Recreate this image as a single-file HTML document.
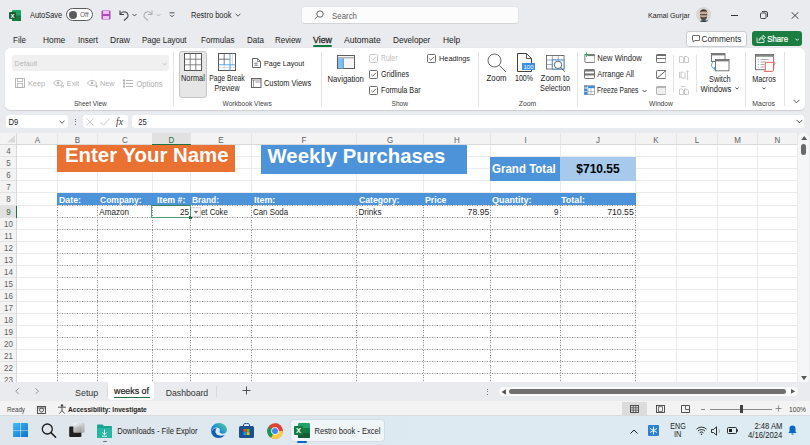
<!DOCTYPE html><html><head><meta charset="utf-8"><style>
html,body{margin:0;padding:0;}
body{width:810px;height:445px;overflow:hidden;position:relative;background:#eaebee;font-family:"Liberation Sans", sans-serif;}
.t{position:absolute;white-space:nowrap;}
.b{position:absolute;box-sizing:border-box;}
svg{position:absolute;}
</style></head><body>
<svg style="left:9px;top:10px" width="12" height="11" viewBox="0 0 12 11"><rect x="3" y="0" width="9" height="11" rx="1" fill="#21a366"/><rect x="3" y="5.5" width="9" height="5.5" fill="#107c41"/><rect x="0" y="2" width="7" height="7" rx="1" fill="#185c37"/><text x="3.5" y="7.6" font-size="6" font-weight="bold" fill="#fff" text-anchor="middle" font-family="Liberation Sans">X</text></svg>
<div class="t" style="left:30px;top:12.06px;font-size:7.4px;line-height:8.88px;color:#242424;transform:scale(1.0,1.1);transform-origin:left center;">AutoSave</div>
<div class="b" style="left:66px;top:8px;width:27px;height:13px;border:1px solid #5c5c5c;border-radius:7px;background:#fff;"></div>
<div class="b" style="left:68.5px;top:10.5px;width:8px;height:8px;border-radius:50%;background:#5c5c5c"></div>
<div class="t" style="left:80px;top:11.30px;font-size:6.5px;line-height:7.80px;color:#5c5c5c;transform:scale(1.0,1.1);transform-origin:left center;">Off</div>
<svg style="left:101px;top:10px" width="10" height="10" viewBox="0 0 10 10"><rect x="0.5" y="0.5" width="9" height="9" rx="1" fill="#b146c2"/><rect x="2" y="1" width="6" height="3" fill="#e9c6ee"/><rect x="2" y="6" width="6" height="3.2" fill="#e9c6ee"/></svg>
<svg style="left:118px;top:9px" width="12" height="12" viewBox="0 0 12 12"><path d="M2 1.5v4h4" fill="none" stroke="#424242" stroke-width="1.1"/><path d="M2.3 5.2C3.5 3 6 2.2 8 3.2c2 1 2.6 3.5 1.5 5.3L6 11.5" fill="none" stroke="#424242" stroke-width="1.1"/></svg>
<svg style="left:132px;top:13px" width="5" height="4" viewBox="0 0 5 4"><path d="M0.5 1l2 2 2-2" fill="none" stroke="#424242" stroke-width="0.9"/></svg>
<svg style="left:142px;top:9px" width="12" height="12" viewBox="0 0 12 12"><path d="M10 1.5v4h-4" fill="none" stroke="#b0b0b0" stroke-width="1.1"/><path d="M9.7 5.2C8.5 3 6 2.2 4 3.2c-2 1-2.6 3.5-1.5 5.3L6 11.5" fill="none" stroke="#b0b0b0" stroke-width="1.1"/></svg>
<svg style="left:156px;top:13px" width="5" height="4" viewBox="0 0 5 4"><path d="M0.5 1l2 2 2-2" fill="none" stroke="#b0b0b0" stroke-width="0.9"/></svg>
<svg style="left:169px;top:12px" width="6" height="6" viewBox="0 0 6 6"><path d="M0.5 0.8h5" stroke="#424242" stroke-width="0.9"/><path d="M1 2.8l2 2 2-2" fill="none" stroke="#424242" stroke-width="0.9"/></svg>
<div class="t" style="left:191px;top:11.30px;font-size:7.5px;line-height:9.00px;color:#242424;transform:scale(1.0,1.1);transform-origin:left center;">Restro book</div>
<svg style="left:235px;top:13px" width="6" height="4" viewBox="0 0 6 4"><path d="M0.5 0.7l2.5 2.5 2.5-2.5" fill="none" stroke="#424242" stroke-width="0.9"/></svg>
<div class="b" style="left:301px;top:5.5px;width:218.20000000000005px;height:18.7px;background:#fcfcfc;border:1px solid #e2e4e7;border-bottom-color:#d2d4d8;border-radius:4px;"></div>
<svg style="left:314px;top:9.5px" width="10" height="10" viewBox="0 0 10 10"><circle cx="6" cy="4" r="3.2" fill="none" stroke="#555" stroke-width="0.9"/><path d="M3.7 6.3L0.8 9.2" stroke="#555" stroke-width="0.9"/></svg>
<div class="t" style="left:332px;top:11.66px;font-size:7.9px;line-height:9.48px;color:#5f5f5f;transform:scale(1.0,1.1);transform-origin:left center;">Search</div>
<div class="t" style="left:648px;top:11.54px;font-size:7.1px;line-height:8.52px;color:#242424;transform:scale(1.0,1.1);transform-origin:left center;">Kamal Gurjar</div>
<svg style="left:696px;top:7.3px" width="15.2" height="15.2" viewBox="0 0 15.2 15.2"><defs><clipPath id="av"><circle cx="7.6" cy="7.6" r="7.6"/></clipPath></defs><g clip-path="url(#av)"><rect width="15.2" height="15.2" fill="#dcd6d0"/><ellipse cx="7.6" cy="8" rx="3.6" ry="5" fill="#d4a88c"/><path d="M3.8 6.5C3.8 3.5 5.5 2.3 7.6 2.3s3.8 1.2 3.8 4.2L10.8 5C9.5 4.3 5.7 4.3 4.4 5z" fill="#3a3a3a"/><rect x="4" y="7" width="7.2" height="1.3" fill="#555"/><path d="M4.2 9.2c0 2.5 1.3 4 3.4 4s3.4-1.5 3.4-4c-.8.8-1.8 1-3.4 1s-2.6-.2-3.4-1z" fill="#4a4a4a"/><path d="M3.5 15.2c.5-1.5 1.5-2 4.1-2s3.6.5 4.1 2z" fill="#2f3a48"/><path d="M10 13.8l2-1 .8 2.4z" fill="#2a6fd0"/></g></svg>
<div class="b" style="left:731px;top:14.5px;width:7px;height:1.0px;background:#333;"></div>
<svg style="left:760px;top:11px" width="8" height="8" viewBox="0 0 8 8"><rect x="0.5" y="2" width="5.5" height="5.5" rx="1" fill="none" stroke="#333" stroke-width="0.9"/><path d="M2 0.5h4a1.5 1.5 0 0 1 1.5 1.5v4" fill="none" stroke="#333" stroke-width="0.9"/></svg>
<svg style="left:791px;top:11.5px" width="8" height="7" viewBox="0 0 8 7"><path d="M0.5 0.2l7 6.6M7.5 0.2l-7 6.6" stroke="#333" stroke-width="0.9"/></svg>
<div class="t" style="left:13px;top:35.88px;font-size:8.2px;line-height:9.84px;color:#242424;transform:scale(0.9756097560975611,1.1);transform-origin:left center;">File</div>
<div class="t" style="left:43px;top:35.88px;font-size:8.2px;line-height:9.84px;color:#242424;transform:scale(1.0170731707317073,1.1);transform-origin:left center;">Home</div>
<div class="t" style="left:78px;top:35.88px;font-size:8.2px;line-height:9.84px;color:#242424;transform:scale(0.9756097560975611,1.1);transform-origin:left center;">Insert</div>
<div class="t" style="left:110px;top:35.88px;font-size:8.2px;line-height:9.84px;color:#242424;transform:scale(1.0426829268292686,1.1);transform-origin:left center;">Draw</div>
<div class="t" style="left:142.4px;top:35.88px;font-size:8.2px;line-height:9.84px;color:#242424;transform:scale(0.9695121951219513,1.1);transform-origin:left center;">Page Layout</div>
<div class="t" style="left:200.5px;top:35.88px;font-size:8.2px;line-height:9.84px;color:#242424;transform:scale(0.9817073170731709,1.1);transform-origin:left center;">Formulas</div>
<div class="t" style="left:246.7px;top:35.88px;font-size:8.2px;line-height:9.84px;color:#242424;transform:scale(0.9756097560975611,1.1);transform-origin:left center;">Data</div>
<div class="t" style="left:275px;top:35.88px;font-size:8.2px;line-height:9.84px;color:#242424;transform:scale(0.9695121951219513,1.1);transform-origin:left center;">Review</div>
<div class="t" style="left:343.6px;top:35.88px;font-size:8.2px;line-height:9.84px;color:#242424;transform:scale(1.0463414634146342,1.1);transform-origin:left center;">Automate</div>
<div class="t" style="left:393px;top:35.88px;font-size:8.2px;line-height:9.84px;color:#242424;transform:scale(1.0,1.1);transform-origin:left center;">Developer</div>
<div class="t" style="left:443.2px;top:35.88px;font-size:8.2px;line-height:9.84px;color:#242424;transform:scale(1.0231707317073173,1.1);transform-origin:left center;">Help</div>
<div class="t" style="left:312.8px;top:35.88px;font-size:8.2px;line-height:9.84px;color:#242424;transform:scale(1.0731707317073174,1.1);transform-origin:left center;-webkit-text-stroke:0.25px #242424;">View</div>
<div class="b" style="left:313px;top:45px;width:19px;height:1.5px;background:#107c41;border-radius:1px;"></div>
<div class="b" style="left:686px;top:31px;width:61px;height:15.5px;background:#fff;border:1px solid #c9ccd1;border-radius:3px;"></div>
<svg style="left:691.5px;top:35px" width="8" height="7.5" viewBox="0 0 8 7.5"><path d="M0.5 1a.5.5 0 0 1 .5-.5h6a.5.5 0 0 1 .5.5v4a.5.5 0 0 1-.5.5H3L1.2 7V5.5H1a.5.5 0 0 1-.5-.5z" fill="none" stroke="#444" stroke-width="0.8"/></svg>
<div class="t" style="left:701.6px;top:35.07px;font-size:8.22px;line-height:9.86px;color:#242424;transform:scale(1.0,1.1);transform-origin:left center;">Comments</div>
<div class="b" style="left:752.2px;top:31.2px;width:50.09999999999991px;height:14.599999999999998px;background:#1b7d41;border-radius:3px;"></div>
<svg style="left:756px;top:34px" width="10" height="9" viewBox="0 0 10 9"><path d="M1 3.5v5h7v-2.5" fill="none" stroke="#fff" stroke-width="0.8"/><path d="M3 6.5c0-2.5 2-3.5 4-3.5V1.2l2.5 2.3L7 5.8V4.3c-2 0-3 .8-4 2.2z" fill="none" stroke="#fff" stroke-width="0.8"/></svg>
<div class="t" style="left:767.2px;top:35.32px;font-size:7.8px;line-height:9.36px;color:#fff;transform:scale(1.0,1.1);transform-origin:left center;-webkit-text-stroke:0.2px #fff;">Share</div>
<svg style="left:794.8px;top:37.8px" width="4.4" height="3.2" viewBox="0 0 4.4 3.2"><path d="M0.4 0.6l1.8 1.8 1.8-1.8" fill="none" stroke="#fff" stroke-width="0.9"/></svg>
<div class="b" style="left:5px;top:48px;width:800px;height:62px;background:#fff;border-radius:5px;box-shadow:0 0.5px 1px rgba(0,0,0,0.12);"></div>
<div class="b" style="left:173px;top:52px;width:1px;height:54px;background:#e3e3e3;"></div>
<div class="b" style="left:321px;top:52px;width:1px;height:54px;background:#e3e3e3;"></div>
<div class="b" style="left:478px;top:52px;width:1px;height:54px;background:#e3e3e3;"></div>
<div class="b" style="left:576.5px;top:52px;width:1.0px;height:54px;background:#e3e3e3;"></div>
<div class="b" style="left:672.5px;top:55px;width:1.0px;height:38px;background:#e3e3e3;"></div>
<div class="b" style="left:695.5px;top:55px;width:1.0px;height:38px;background:#e3e3e3;"></div>
<div class="b" style="left:745px;top:52px;width:1px;height:54px;background:#e3e3e3;"></div>
<div class="b" style="left:783.5px;top:52px;width:1.0px;height:54px;background:#e3e3e3;"></div>
<div class="b" style="left:12px;top:55px;width:157px;height:15.5px;background:#f0f0f0;border-radius:3px;"></div>
<div class="t" style="left:14.5px;top:59.98px;font-size:7.2px;line-height:8.64px;color:#b8b8b8;transform:scale(1.0,1.1);transform-origin:left center;">Default</div>
<svg style="left:162px;top:61.5px" width="5" height="4" viewBox="0 0 5 4"><path d="M0.5 1l2 2 2-2" fill="none" stroke="#bdbdbd" stroke-width="0.8"/></svg>
<svg style="left:15px;top:78px" width="10" height="10" viewBox="0 0 10 10"><rect x="0.5" y="0.5" width="9" height="9" fill="none" stroke="#b0b0b0" stroke-width="0.9"/><rect x="2.5" y="0.5" width="5" height="3" fill="none" stroke="#b0b0b0" stroke-width="0.8"/><rect x="2.5" y="5.5" width="5" height="4" fill="none" stroke="#b0b0b0" stroke-width="0.8"/></svg>
<div class="t" style="left:28px;top:79.92px;font-size:7.3px;line-height:8.76px;color:#b0b0b0;transform:scale(1.0,1.1);transform-origin:left center;">Keep</div>
<svg style="left:53px;top:79px" width="12" height="9" viewBox="0 0 12 9"><path d="M0.5 4c2-3.5 7-3.5 9 0-2 3.5-7 3.5-9 0z" fill="none" stroke="#b0b0b0" stroke-width="0.9"/><circle cx="5" cy="4" r="1.3" fill="#b0b0b0"/><path d="M8 6l3 2.5M11 6l-3 2.5" stroke="#b0b0b0" stroke-width="0.8"/></svg>
<div class="t" style="left:66.8px;top:79.92px;font-size:7.3px;line-height:8.76px;color:#b0b0b0;transform:scale(1.0,1.1);transform-origin:left center;">Exit</div>
<svg style="left:87px;top:79px" width="12" height="9" viewBox="0 0 12 9"><path d="M0.5 4c2-3.5 7-3.5 9 0-2 3.5-7 3.5-9 0z" fill="none" stroke="#b0b0b0" stroke-width="0.9"/><circle cx="5" cy="4" r="1.3" fill="#b0b0b0"/><path d="M9.5 5.5v3.3M7.8 7.2h3.4" stroke="#b0b0b0" stroke-width="0.8"/></svg>
<div class="t" style="left:99.9px;top:79.92px;font-size:7.3px;line-height:8.76px;color:#b0b0b0;transform:scale(1.0,1.1);transform-origin:left center;">New</div>
<svg style="left:123px;top:78.5px" width="10" height="9" viewBox="0 0 10 9"><rect x="0" y="0.5" width="2" height="2" fill="#b0b0b0"/><rect x="0" y="3.5" width="2" height="2" fill="#b0b0b0"/><rect x="0" y="6.5" width="2" height="2" fill="#b0b0b0"/><path d="M3 1.5h7M3 4.5h7M3 7.5h7" stroke="#b0b0b0" stroke-width="0.9"/></svg>
<div class="t" style="left:136.5px;top:79.77px;font-size:7.55px;line-height:9.06px;color:#b0b0b0;transform:scale(1.0,1.1);transform-origin:left center;">Options</div>
<div class="t" style="left:74px;top:100.20px;font-size:6.5px;line-height:7.80px;color:#424242;transform:scale(1.0,1.1);transform-origin:left center;">Sheet View</div>
<div class="b" style="left:179px;top:50.5px;width:27.5px;height:47.0px;background:#e6e6e6;border:1px solid #c6c6c6;border-radius:3px;"></div>
<svg style="left:184px;top:53px" width="18" height="18" viewBox="0 0 18 18"><rect x="0.5" y="0.5" width="17" height="17" fill="#fff" stroke="#555" stroke-width="1"/><path d="M6.2 0.5v17M11.8 0.5v17M0.5 6.2h17M0.5 11.8h17" stroke="#6a6a6a" stroke-width="0.8"/></svg>
<div class="t" style="left:181px;top:74.96px;font-size:7.4px;line-height:8.88px;color:#242424;transform:scale(1.0,1.1);transform-origin:left center;">Normal</div>
<svg style="left:218px;top:53px" width="18" height="18" viewBox="0 0 18 18"><rect x="0.5" y="0.5" width="17" height="17" fill="#fff" stroke="#555" stroke-width="1"/><path d="M6.2 0.5v11.3M0.5 6.2h11.3" stroke="#555" stroke-width="0.8"/><path d="M0.5 14.5h17M6.2 11.8v5.7M11.8 14.5v3M14.5 0.5v6M14.5 6.2v5.6" stroke="#c8c8c8" stroke-width="0.6"/><path d="M12 0.5v17M0.5 11.8h17" stroke="#4a9ce0" stroke-width="0.9"/></svg>
<div class="t" style="left:227.4px;top:74.96px;font-size:7.4px;line-height:8.88px;color:#242424;transform:translateX(-50%) scale(0.917,1.1);transform-origin:center center;">Page Break</div>
<div class="t" style="left:227.45px;top:84.76px;font-size:7.4px;line-height:8.88px;color:#242424;transform:translateX(-50%) scale(0.954,1.1);transform-origin:center center;">Preview</div>
<svg style="left:252px;top:58px" width="9" height="10" viewBox="0 0 9 10"><path d="M0.5 0.5h5l3 3v6h-8z" fill="#fff" stroke="#555" stroke-width="0.9"/><path d="M5.5 0.5v3h3" fill="none" stroke="#555" stroke-width="0.7"/><path d="M2 5.3h4M2 7.3h4M4 4.3v4" stroke="#777" stroke-width="0.7"/></svg>
<div class="t" style="left:264px;top:59.88px;font-size:7.2px;line-height:8.64px;color:#242424;transform:scale(1.0,1.1);transform-origin:left center;">Page Layout</div>
<svg style="left:251px;top:78px" width="10.5" height="10" viewBox="0 0 10.5 10"><rect x="0.5" y="0.5" width="9.5" height="9" fill="#fff" stroke="#555" stroke-width="0.9"/><path d="M0.5 2h9.5M2.5 2v7.5M4.5 4h5" stroke="#666" stroke-width="0.7"/></svg>
<div class="t" style="left:264px;top:80.46px;font-size:7.4px;line-height:8.88px;color:#242424;transform:scale(1.0,1.1);transform-origin:left center;">Custom Views</div>
<div class="t" style="left:222.5px;top:100.11px;font-size:6.65px;line-height:7.98px;color:#424242;transform:scale(1.0,1.1);transform-origin:left center;">Workbook Views</div>
<svg style="left:337px;top:55px" width="18" height="14" viewBox="0 0 18 14"><rect x="0.5" y="0.5" width="17" height="13" fill="#f6f6f6" stroke="#5e5e5e" stroke-width="1"/><path d="M0.5 2.8h17" stroke="#8a8a8a" stroke-width="0.9"/><rect x="1" y="3.3" width="5.5" height="10.2" fill="#86bdf0"/><path d="M6.3 3.3v10.2" stroke="#3a8ad8" stroke-width="0.8"/></svg>
<div class="t" style="left:327.5px;top:74.78px;font-size:7.7px;line-height:9.24px;color:#242424;transform:scale(1.0,1.1);transform-origin:left center;">Navigation</div>
<svg style="left:369px;top:54.1px" width="9" height="9" viewBox="0 0 9 9"><rect x="0.5" y="0.5" width="8" height="8" rx="1" fill="#fff" stroke="#c4c4c4" stroke-width="0.9"/><path d="M2.2 4.6l1.6 1.6 3.2-3.4" fill="none" stroke="#c4c4c4" stroke-width="0.9"/></svg>
<div class="t" style="left:380.8px;top:54.96px;font-size:7.4px;line-height:8.88px;color:#bdbdbd;transform:scale(0.93,1.1);transform-origin:left center;">Ruler</div>
<svg style="left:369px;top:69.9px" width="9" height="9" viewBox="0 0 9 9"><rect x="0.5" y="0.5" width="8" height="8" rx="1" fill="#fff" stroke="#5c5c5c" stroke-width="0.9"/><path d="M2.2 4.6l1.6 1.6 3.2-3.4" fill="none" stroke="#5c5c5c" stroke-width="0.9"/></svg>
<div class="t" style="left:380.8px;top:70.76px;font-size:7.4px;line-height:8.88px;color:#242424;transform:scale(0.96,1.1);transform-origin:left center;">Gridlines</div>
<svg style="left:369px;top:85.6px" width="9" height="9" viewBox="0 0 9 9"><rect x="0.5" y="0.5" width="8" height="8" rx="1" fill="#fff" stroke="#5c5c5c" stroke-width="0.9"/><path d="M2.2 4.6l1.6 1.6 3.2-3.4" fill="none" stroke="#5c5c5c" stroke-width="0.9"/></svg>
<div class="t" style="left:380.8px;top:87.26px;font-size:7.4px;line-height:8.88px;color:#242424;transform:scale(0.973,1.1);transform-origin:left center;">Formula Bar</div>
<svg style="left:427px;top:54.1px" width="9" height="9" viewBox="0 0 9 9"><rect x="0.5" y="0.5" width="8" height="8" rx="1" fill="#fff" stroke="#5c5c5c" stroke-width="0.9"/><path d="M2.2 4.6l1.6 1.6 3.2-3.4" fill="none" stroke="#5c5c5c" stroke-width="0.9"/></svg>
<div class="t" style="left:439px;top:54.99px;font-size:7.35px;line-height:8.82px;color:#242424;transform:scale(1.0,1.1);transform-origin:left center;">Headings</div>
<div class="t" style="left:391.5px;top:100.14px;font-size:6.6px;line-height:7.92px;color:#424242;transform:scale(1.0,1.1);transform-origin:left center;">Show</div>
<svg style="left:487px;top:53px" width="20" height="20" viewBox="0 0 20 20"><circle cx="7.5" cy="7.5" r="6.5" fill="none" stroke="#555" stroke-width="0.9"/><path d="M12.3 12.3l6.5 6.5" stroke="#555" stroke-width="0.9"/></svg>
<div class="t" style="left:486.5px;top:74.00px;font-size:7.83px;line-height:9.40px;color:#242424;transform:scale(1.0,1.1);transform-origin:left center;">Zoom</div>
<svg style="left:517px;top:53px" width="18" height="19" viewBox="0 0 18 19"><path d="M0.5 0.5h9l5 5v13h-14z" fill="#fff" stroke="#424242" stroke-width="1"/><path d="M9.5 0.5v5h5" fill="none" stroke="#424242" stroke-width="0.9"/><rect x="5" y="10" width="13" height="7" fill="#3b8ee0"/><text x="11.5" y="16" font-size="6" fill="#fff" text-anchor="middle" font-family="Liberation Sans">100</text></svg>
<div class="t" style="left:515.3px;top:74.96px;font-size:7.4px;line-height:8.88px;color:#242424;transform:scale(0.952,1.1);transform-origin:left center;">100%</div>
<svg style="left:546px;top:55px" width="20" height="18" viewBox="0 0 20 18"><rect x="0.5" y="0.5" width="17.5" height="13.5" fill="#fff" stroke="#666" stroke-width="0.9"/><path d="M0.5 5h17.5M0.5 9.5h17.5M6.3 0.5v13.5M12.2 0.5v13.5" stroke="#8a8a8a" stroke-width="0.7"/><rect x="6.3" y="5" width="11.7" height="9" fill="#fff" stroke="#3a8ad8" stroke-width="0.9"/><circle cx="12" cy="9.8" r="3.7" fill="#fff" stroke="#555" stroke-width="0.9"/><path d="M14.7 12.5l4.3 4.3" stroke="#555" stroke-width="0.9"/></svg>
<div class="t" style="left:555.15px;top:73.93px;font-size:7.95px;line-height:9.54px;color:#242424;transform:translateX(-50%) scale(1.0,1.1);transform-origin:center center;">Zoom to</div>
<div class="t" style="left:555.2px;top:84.96px;font-size:7.4px;line-height:8.88px;color:#242424;transform:translateX(-50%) scale(1.0,1.1);transform-origin:center center;">Selection</div>
<div class="t" style="left:527.5px;top:99.99px;font-size:6.85px;line-height:8.22px;color:#424242;transform:translateX(-50%) scale(1.0,1.1);transform-origin:center center;">Zoom</div>
<svg style="left:583.7px;top:52px" width="11.5" height="11" viewBox="0 0 11.5 11"><rect x="0.9" y="2.6" width="10" height="7.8" rx="0.8" fill="#fff" stroke="#666" stroke-width="0.9"/><path d="M3.5 3.4h7.4" stroke="#777" stroke-width="1.4"/><path d="M2.6 0.3v4.6M0.3 2.6h4.6" stroke="#22a04b" stroke-width="0.9"/></svg>
<div class="t" style="left:597.3px;top:54.13px;font-size:7.62px;line-height:9.14px;color:#242424;transform:scale(1.0,1.1);transform-origin:left center;">New Window</div>
<svg style="left:583.7px;top:69px" width="11" height="10" viewBox="0 0 11 10"><rect x="0.5" y="0.5" width="10" height="9" rx="0.8" fill="#fff" stroke="#666" stroke-width="0.9"/><path d="M0.5 1.6h10M0.5 5.6h10" stroke="#777" stroke-width="1.6"/><path d="M0.5 4.8h10" stroke="#666" stroke-width="0.6"/></svg>
<div class="t" style="left:597.3px;top:70.00px;font-size:7.5px;line-height:9.00px;color:#242424;transform:scale(1.0,1.1);transform-origin:left center;">Arrange All</div>
<svg style="left:583.7px;top:84.5px" width="11" height="10" viewBox="0 0 11 10"><rect x="0.5" y="0.5" width="10" height="9" fill="#fff" stroke="#999" stroke-width="0.8"/><path d="M0.5 6.5h10M7 3.5v6M4 3.5v6" stroke="#a8a8a8" stroke-width="0.7"/><rect x="4" y="1" width="6.5" height="2.2" fill="#3a8ad8"/><rect x="0.3" y="3.6" width="3.2" height="6.1" fill="#3a8ad8"/><path d="M2 0v3.2M0.4 1.6h3.2" stroke="#3a8ad8" stroke-width="0.9"/><path d="M0.3 6.5h3.2" stroke="#fff" stroke-width="0.6"/></svg>
<div class="t" style="left:597.3px;top:86.34px;font-size:7.6px;line-height:9.12px;color:#242424;transform:scale(0.875,1.1);transform-origin:left center;">Freeze Panes</div>
<svg style="left:641.7px;top:89px" width="5" height="4" viewBox="0 0 5 4"><path d="M0.5 1l2 2 2-2" fill="none" stroke="#424242" stroke-width="0.9"/></svg>
<div class="t" style="left:661px;top:100.08px;font-size:6.7px;line-height:8.04px;color:#424242;transform:translateX(-50%) scale(1.0,1.1);transform-origin:center center;">Window</div>
<svg style="left:655.5px;top:54px" width="10.5" height="9" viewBox="0 0 10.5 9"><rect x="0.5" y="0.5" width="9.5" height="8" rx="0.8" fill="#fff" stroke="#666" stroke-width="0.9"/><path d="M0.5 1.3h9.5" stroke="#666" stroke-width="1.3"/><path d="M0.5 4.5h9.5" stroke="#666" stroke-width="0.9"/></svg>
<svg style="left:655.5px;top:69.8px" width="10.5" height="9" viewBox="0 0 10.5 9"><rect x="0.5" y="0.5" width="9.5" height="8" rx="0.8" fill="#fff" stroke="#666" stroke-width="0.9"/><path d="M1 8.2L9.6 0.8" stroke="#444" stroke-width="0.9"/></svg>
<svg style="left:655.5px;top:85.8px" width="10.5" height="9" viewBox="0 0 10.5 9"><rect x="0.5" y="0.5" width="9.5" height="8" rx="0.8" fill="#eeeeee" stroke="#aaa" stroke-width="0.9"/><path d="M0.5 1.3h9.5" stroke="#aaa" stroke-width="1.1"/></svg>
<svg style="left:678.8px;top:54.5px" width="10" height="8" viewBox="0 0 10 8"><path d="M0.5 1.5h2.5l1.5 1.5v4.5h-4z" fill="none" stroke="#c4c4c4" stroke-width="0.9"/><path d="M5.5 1.5h2.5l1.5 1.5v4.5h-4z" fill="none" stroke="#c4c4c4" stroke-width="0.9"/></svg>
<svg style="left:678.8px;top:69.5px" width="10" height="10" viewBox="0 0 10 10"><path d="M0.5 2v6M2 2h2.5l1.5 1.5V8H2z" fill="none" stroke="#c4c4c4" stroke-width="0.9"/><path d="M8.5 0.5v9M7.3 1.7l1.2-1.2 1.2 1.2M7.3 8.3l1.2 1.2 1.2-1.2" fill="none" stroke="#c4c4c4" stroke-width="0.8"/></svg>
<svg style="left:678.8px;top:85.3px" width="10" height="10" viewBox="0 0 10 10"><path d="M0.5 4h2.5l1.5 1.5v4h-4zM5.5 4h2.5l1.5 1.5v4h-4z" fill="none" stroke="#c4c4c4" stroke-width="0.9"/><path d="M2.5 1.5h4M2.5 1.5l1-1M2.5 1.5l1 1" fill="none" stroke="#c4c4c4" stroke-width="0.7"/></svg>
<svg style="left:709px;top:52px" width="22" height="20" viewBox="0 0 22 20"><rect x="2.5" y="1.5" width="13.5" height="8" fill="#fff" stroke="#6a6a6a" stroke-width="0.9"/><path d="M2.5 2.6h13.5" stroke="#7a7a7a" stroke-width="1.6"/><rect x="6.5" y="7.5" width="13.5" height="11.3" fill="#fff" stroke="#6a6a6a" stroke-width="0.9"/><path d="M6.5 8.6h13.5" stroke="#7a7a7a" stroke-width="1.6"/><path d="M4.3 9.8C1.6 11.5 1.8 16.3 6.3 16.8" fill="none" stroke="#3a8ad8" stroke-width="0.9"/><path d="M4.8 15l1.8 1.8-1.8 1.8" fill="none" stroke="#3a8ad8" stroke-width="0.9"/></svg>
<div class="t" style="left:719.85px;top:75.66px;font-size:7.4px;line-height:8.88px;color:#242424;transform:translateX(-50%) scale(1.0,1.1);transform-origin:center center;">Switch</div>
<div class="t" style="left:716px;top:84.84px;font-size:7.6px;line-height:9.12px;color:#242424;transform:translateX(-50%) scale(1.0,1.1);transform-origin:center center;">Windows</div>
<svg style="left:734.6px;top:86.6px" width="4" height="3" viewBox="0 0 4 3"><path d="M0.4 0.5l1.6 1.6 1.6-1.6" fill="none" stroke="#424242" stroke-width="0.9"/></svg>
<svg style="left:755px;top:54px" width="21" height="18" viewBox="0 0 21 18"><rect x="0.5" y="0.5" width="18.2" height="15.2" fill="#fff" stroke="#6a6a6a" stroke-width="0.9"/><path d="M0.5 1.9h18.2" stroke="#7a7a7a" stroke-width="1.6"/><path d="M2.8 5.5h1.2M5.5 5.5h8M2.8 8h1.2M5.5 8h5M2.8 10.5h1.2M5.5 10.5h4M2.8 13h1.2M5.5 13h4" stroke="#9a9a9a" stroke-width="0.8"/><path d="M10.3 8.3h8.2v7.6c0 .9-.7 1.5-1.5 1.5H9.3c.7 0 1-.6 1-1.3z" fill="#fff" stroke="#e5534b" stroke-width="0.9"/><path d="M18.5 8.3c.9 0 1.6.5 1.6 1.2s-.7 1.2-1.6 1.2" fill="none" stroke="#e5534b" stroke-width="0.8"/></svg>
<div class="t" style="left:764.35px;top:75.56px;font-size:7.4px;line-height:8.88px;color:#242424;transform:translateX(-50%) scale(0.98,1.1);transform-origin:center center;">Macros</div>
<svg style="left:762.3px;top:87.3px" width="4" height="3" viewBox="0 0 4 3"><path d="M0.4 0.5l1.6 1.6 1.6-1.6" fill="none" stroke="#424242" stroke-width="0.9"/></svg>
<div class="t" style="left:763.65px;top:99.93px;font-size:6.95px;line-height:8.34px;color:#424242;transform:translateX(-50%) scale(1.0,1.1);transform-origin:center center;">Macros</div>
<svg style="left:792.5px;top:98.5px" width="7" height="5" viewBox="0 0 7 5"><path d="M0.5 0.8l3 3 3-3" fill="none" stroke="#424242" stroke-width="0.9"/></svg>
<div class="b" style="left:6px;top:115px;width:62px;height:13px;background:#fff;border-radius:3px;"></div>
<div class="t" style="left:8.5px;top:117.84px;font-size:7.6px;line-height:9.12px;color:#242424;transform:scale(1.0,1.1);transform-origin:left center;">D9</div>
<svg style="left:59px;top:119.5px" width="6" height="4" viewBox="0 0 6 4"><path d="M0.5 0.7l2.5 2.5 2.5-2.5" fill="none" stroke="#424242" stroke-width="0.9"/></svg>
<div class="b" style="left:74.5px;top:118.5px;width:1.2999999999999972px;height:1.2999999999999972px;background:#424242;border-radius:50%;"></div>
<div class="b" style="left:74.5px;top:121.2px;width:1.2999999999999972px;height:1.2999999999999972px;background:#424242;border-radius:50%;"></div>
<div class="b" style="left:74.5px;top:123.9px;width:1.2999999999999972px;height:1.2999999999999972px;background:#424242;border-radius:50%;"></div>
<div class="b" style="left:82.5px;top:115px;width:45.0px;height:13px;background:#fff;border-radius:3px;"></div>
<svg style="left:86px;top:117.5px" width="8" height="8" viewBox="0 0 8 8"><path d="M0.5 0.5l7 7M7.5 0.5l-7 7" stroke="#c4c4c4" stroke-width="0.9"/></svg>
<svg style="left:100px;top:118px" width="10" height="8" viewBox="0 0 10 8"><path d="M0.5 4l3 3.2L9.5 0.5" fill="none" stroke="#c4c4c4" stroke-width="0.9"/></svg>
<div class="t" style="left:116px;top:116.60px;font-size:9.5px;line-height:11.40px;color:#333;transform:scale(1.0,1.1);transform-origin:left center;font-family:'Liberation Serif',serif;"><i>fx</i></div>
<div class="b" style="left:131.5px;top:115px;width:672.7px;height:13px;background:#fff;border-radius:3px;"></div>
<div class="t" style="left:138.3px;top:117.84px;font-size:7.6px;line-height:9.12px;color:#242424;transform:scale(1.0,1.1);transform-origin:left center;">25</div>
<svg style="left:795.8px;top:119.3px" width="7" height="5" viewBox="0 0 7 5"><path d="M0.5 0.8l3 3 3-3" fill="none" stroke="#424242" stroke-width="0.9"/></svg>
<div class="b" style="left:0px;top:133px;width:810px;height:249px;background:#fff;"></div>
<div class="b" style="left:0px;top:133px;width:797px;height:11px;background:#f3f3f3;"></div>
<div class="b" style="left:0px;top:144px;width:17px;height:238px;background:#f3f3f3;"></div>
<svg style="left:0;top:0" width="810" height="445" viewBox="0 0 810 445" shape-rendering="crispEdges"><line x1="57.5" y1="144" x2="57.5" y2="382" stroke="#ebebeb" stroke-width="1"/><line x1="97.5" y1="144" x2="97.5" y2="382" stroke="#ebebeb" stroke-width="1"/><line x1="152.5" y1="144" x2="152.5" y2="382" stroke="#ebebeb" stroke-width="1"/><line x1="190.5" y1="144" x2="190.5" y2="382" stroke="#ebebeb" stroke-width="1"/><line x1="251.5" y1="144" x2="251.5" y2="382" stroke="#ebebeb" stroke-width="1"/><line x1="356.5" y1="144" x2="356.5" y2="382" stroke="#ebebeb" stroke-width="1"/><line x1="423.5" y1="144" x2="423.5" y2="382" stroke="#ebebeb" stroke-width="1"/><line x1="490.5" y1="144" x2="490.5" y2="382" stroke="#ebebeb" stroke-width="1"/><line x1="560.5" y1="144" x2="560.5" y2="382" stroke="#ebebeb" stroke-width="1"/><line x1="635.5" y1="144" x2="635.5" y2="382" stroke="#ebebeb" stroke-width="1"/><line x1="676.5" y1="144" x2="676.5" y2="382" stroke="#ebebeb" stroke-width="1"/><line x1="717.5" y1="144" x2="717.5" y2="382" stroke="#ebebeb" stroke-width="1"/><line x1="757.5" y1="144" x2="757.5" y2="382" stroke="#ebebeb" stroke-width="1"/><line x1="797.5" y1="144" x2="797.5" y2="382" stroke="#ebebeb" stroke-width="1"/><line x1="17" y1="156.5" x2="797" y2="156.5" stroke="#ebebeb" stroke-width="1"/><line x1="17" y1="168.5" x2="797" y2="168.5" stroke="#ebebeb" stroke-width="1"/><line x1="17" y1="180.5" x2="797" y2="180.5" stroke="#ebebeb" stroke-width="1"/><line x1="17" y1="192.5" x2="797" y2="192.5" stroke="#ebebeb" stroke-width="1"/><line x1="17" y1="205.5" x2="797" y2="205.5" stroke="#ebebeb" stroke-width="1"/><line x1="17" y1="217.5" x2="797" y2="217.5" stroke="#ebebeb" stroke-width="1"/><line x1="17" y1="229.5" x2="797" y2="229.5" stroke="#ebebeb" stroke-width="1"/><line x1="17" y1="241.5" x2="797" y2="241.5" stroke="#ebebeb" stroke-width="1"/><line x1="17" y1="253.5" x2="797" y2="253.5" stroke="#ebebeb" stroke-width="1"/><line x1="17" y1="265.5" x2="797" y2="265.5" stroke="#ebebeb" stroke-width="1"/><line x1="17" y1="277.5" x2="797" y2="277.5" stroke="#ebebeb" stroke-width="1"/><line x1="17" y1="289.5" x2="797" y2="289.5" stroke="#ebebeb" stroke-width="1"/><line x1="17" y1="301.5" x2="797" y2="301.5" stroke="#ebebeb" stroke-width="1"/><line x1="17" y1="313.5" x2="797" y2="313.5" stroke="#ebebeb" stroke-width="1"/><line x1="17" y1="325.5" x2="797" y2="325.5" stroke="#ebebeb" stroke-width="1"/><line x1="17" y1="337.5" x2="797" y2="337.5" stroke="#ebebeb" stroke-width="1"/><line x1="17" y1="349.5" x2="797" y2="349.5" stroke="#ebebeb" stroke-width="1"/><line x1="17" y1="361.5" x2="797" y2="361.5" stroke="#ebebeb" stroke-width="1"/><line x1="17" y1="373.5" x2="797" y2="373.5" stroke="#ebebeb" stroke-width="1"/><line x1="17" y1="385.5" x2="797" y2="385.5" stroke="#ebebeb" stroke-width="1"/><line x1="57.5" y1="133" x2="57.5" y2="144" stroke="#e6e6e6" stroke-width="1"/><line x1="97.5" y1="133" x2="97.5" y2="144" stroke="#e6e6e6" stroke-width="1"/><line x1="152.5" y1="133" x2="152.5" y2="144" stroke="#e6e6e6" stroke-width="1"/><line x1="190.5" y1="133" x2="190.5" y2="144" stroke="#e6e6e6" stroke-width="1"/><line x1="251.5" y1="133" x2="251.5" y2="144" stroke="#e6e6e6" stroke-width="1"/><line x1="356.5" y1="133" x2="356.5" y2="144" stroke="#e6e6e6" stroke-width="1"/><line x1="423.5" y1="133" x2="423.5" y2="144" stroke="#e6e6e6" stroke-width="1"/><line x1="490.5" y1="133" x2="490.5" y2="144" stroke="#e6e6e6" stroke-width="1"/><line x1="560.5" y1="133" x2="560.5" y2="144" stroke="#e6e6e6" stroke-width="1"/><line x1="635.5" y1="133" x2="635.5" y2="144" stroke="#e6e6e6" stroke-width="1"/><line x1="676.5" y1="133" x2="676.5" y2="144" stroke="#e6e6e6" stroke-width="1"/><line x1="717.5" y1="133" x2="717.5" y2="144" stroke="#e6e6e6" stroke-width="1"/><line x1="757.5" y1="133" x2="757.5" y2="144" stroke="#e6e6e6" stroke-width="1"/><line x1="797.5" y1="133" x2="797.5" y2="144" stroke="#e6e6e6" stroke-width="1"/><line x1="0" y1="156.5" x2="17" y2="156.5" stroke="#e3e3e3" stroke-width="1"/><line x1="0" y1="168.5" x2="17" y2="168.5" stroke="#e3e3e3" stroke-width="1"/><line x1="0" y1="180.5" x2="17" y2="180.5" stroke="#e3e3e3" stroke-width="1"/><line x1="0" y1="192.5" x2="17" y2="192.5" stroke="#e3e3e3" stroke-width="1"/><line x1="0" y1="205.5" x2="17" y2="205.5" stroke="#e3e3e3" stroke-width="1"/><line x1="0" y1="217.5" x2="17" y2="217.5" stroke="#e3e3e3" stroke-width="1"/><line x1="0" y1="229.5" x2="17" y2="229.5" stroke="#e3e3e3" stroke-width="1"/><line x1="0" y1="241.5" x2="17" y2="241.5" stroke="#e3e3e3" stroke-width="1"/><line x1="0" y1="253.5" x2="17" y2="253.5" stroke="#e3e3e3" stroke-width="1"/><line x1="0" y1="265.5" x2="17" y2="265.5" stroke="#e3e3e3" stroke-width="1"/><line x1="0" y1="277.5" x2="17" y2="277.5" stroke="#e3e3e3" stroke-width="1"/><line x1="0" y1="289.5" x2="17" y2="289.5" stroke="#e3e3e3" stroke-width="1"/><line x1="0" y1="301.5" x2="17" y2="301.5" stroke="#e3e3e3" stroke-width="1"/><line x1="0" y1="313.5" x2="17" y2="313.5" stroke="#e3e3e3" stroke-width="1"/><line x1="0" y1="325.5" x2="17" y2="325.5" stroke="#e3e3e3" stroke-width="1"/><line x1="0" y1="337.5" x2="17" y2="337.5" stroke="#e3e3e3" stroke-width="1"/><line x1="0" y1="349.5" x2="17" y2="349.5" stroke="#e3e3e3" stroke-width="1"/><line x1="0" y1="361.5" x2="17" y2="361.5" stroke="#e3e3e3" stroke-width="1"/><line x1="0" y1="373.5" x2="17" y2="373.5" stroke="#e3e3e3" stroke-width="1"/><line x1="0" y1="385.5" x2="17" y2="385.5" stroke="#e3e3e3" stroke-width="1"/><line x1="0" y1="144.5" x2="797" y2="144.5" stroke="#d9d9d9" stroke-width="1"/><line x1="16.5" y1="133" x2="16.5" y2="382" stroke="#d9d9d9" stroke-width="1"/></svg>
<svg style="left:7px;top:135.2px" width="8.2" height="7.6" viewBox="0 0 8.2 7.6"><path d="M8.2 0v7.6H0z" fill="#dadada"/></svg>
<div class="t" style="left:37.5px;top:135.70px;font-size:8.0px;line-height:9.60px;color:#616161;transform:translateX(-50%) scale(1.0,1.1);transform-origin:center center;">A</div>
<div class="t" style="left:77.5px;top:135.70px;font-size:8.0px;line-height:9.60px;color:#616161;transform:translateX(-50%) scale(1.0,1.1);transform-origin:center center;">B</div>
<div class="t" style="left:125.0px;top:135.70px;font-size:8.0px;line-height:9.60px;color:#616161;transform:translateX(-50%) scale(1.0,1.1);transform-origin:center center;">C</div>
<div class="t" style="left:171.5px;top:135.70px;font-size:8.0px;line-height:9.60px;color:#1e6e3a;transform:translateX(-50%) scale(1.0,1.1);transform-origin:center center;">D</div>
<div class="t" style="left:221.0px;top:135.70px;font-size:8.0px;line-height:9.60px;color:#616161;transform:translateX(-50%) scale(1.0,1.1);transform-origin:center center;">E</div>
<div class="t" style="left:304.0px;top:135.70px;font-size:8.0px;line-height:9.60px;color:#616161;transform:translateX(-50%) scale(1.0,1.1);transform-origin:center center;">F</div>
<div class="t" style="left:390.0px;top:135.70px;font-size:8.0px;line-height:9.60px;color:#616161;transform:translateX(-50%) scale(1.0,1.1);transform-origin:center center;">G</div>
<div class="t" style="left:457.0px;top:135.70px;font-size:8.0px;line-height:9.60px;color:#616161;transform:translateX(-50%) scale(1.0,1.1);transform-origin:center center;">H</div>
<div class="t" style="left:525.5px;top:135.70px;font-size:8.0px;line-height:9.60px;color:#616161;transform:translateX(-50%) scale(1.0,1.1);transform-origin:center center;">I</div>
<div class="t" style="left:598.0px;top:135.70px;font-size:8.0px;line-height:9.60px;color:#616161;transform:translateX(-50%) scale(1.0,1.1);transform-origin:center center;">J</div>
<div class="t" style="left:656.0px;top:135.70px;font-size:8.0px;line-height:9.60px;color:#616161;transform:translateX(-50%) scale(1.0,1.1);transform-origin:center center;">K</div>
<div class="t" style="left:697.0px;top:135.70px;font-size:8.0px;line-height:9.60px;color:#616161;transform:translateX(-50%) scale(1.0,1.1);transform-origin:center center;">L</div>
<div class="t" style="left:737.5px;top:135.70px;font-size:8.0px;line-height:9.60px;color:#616161;transform:translateX(-50%) scale(1.0,1.1);transform-origin:center center;">M</div>
<div class="t" style="left:777.5px;top:135.70px;font-size:8.0px;line-height:9.60px;color:#616161;transform:translateX(-50%) scale(1.0,1.1);transform-origin:center center;">N</div>
<div class="b" style="left:152px;top:133px;width:38px;height:11px;background:#e1e1e1;"></div>
<div class="b" style="left:152px;top:143.5px;width:39px;height:1.5px;background:#1e7145;"></div>
<div class="t" style="left:171.5px;top:135.70px;font-size:8.0px;line-height:9.60px;color:#1e6e3a;transform:translateX(-50%) scale(1.0,1.1);transform-origin:center center;">D</div>
<div class="t" style="left:8.5px;top:146.50px;font-size:8.0px;line-height:9.60px;color:#616161;transform:translateX(-50%) scale(1.0,1.1);transform-origin:center center;">4</div>
<div class="t" style="left:8.5px;top:158.50px;font-size:8.0px;line-height:9.60px;color:#616161;transform:translateX(-50%) scale(1.0,1.1);transform-origin:center center;">5</div>
<div class="t" style="left:8.5px;top:170.50px;font-size:8.0px;line-height:9.60px;color:#616161;transform:translateX(-50%) scale(1.0,1.1);transform-origin:center center;">6</div>
<div class="t" style="left:8.5px;top:182.50px;font-size:8.0px;line-height:9.60px;color:#616161;transform:translateX(-50%) scale(1.0,1.1);transform-origin:center center;">7</div>
<div class="t" style="left:8.5px;top:195.00px;font-size:8.0px;line-height:9.60px;color:#616161;transform:translateX(-50%) scale(1.0,1.1);transform-origin:center center;">8</div>
<div class="b" style="left:0px;top:205.5px;width:16px;height:12.0px;background:#e1e1e1;"></div>
<div class="b" style="left:16px;top:205.5px;width:1.1999999999999993px;height:12.0px;background:#1e7145;"></div>
<div class="t" style="left:8.5px;top:207.50px;font-size:8.0px;line-height:9.60px;color:#1e6e3a;transform:translateX(-50%) scale(1.0,1.1);transform-origin:center center;">9</div>
<div class="t" style="left:8.5px;top:219.50px;font-size:8.0px;line-height:9.60px;color:#616161;transform:translateX(-50%) scale(1.0,1.1);transform-origin:center center;">10</div>
<div class="t" style="left:8.5px;top:231.50px;font-size:8.0px;line-height:9.60px;color:#616161;transform:translateX(-50%) scale(1.0,1.1);transform-origin:center center;">11</div>
<div class="t" style="left:8.5px;top:243.50px;font-size:8.0px;line-height:9.60px;color:#616161;transform:translateX(-50%) scale(1.0,1.1);transform-origin:center center;">12</div>
<div class="t" style="left:8.5px;top:255.50px;font-size:8.0px;line-height:9.60px;color:#616161;transform:translateX(-50%) scale(1.0,1.1);transform-origin:center center;">13</div>
<div class="t" style="left:8.5px;top:267.50px;font-size:8.0px;line-height:9.60px;color:#616161;transform:translateX(-50%) scale(1.0,1.1);transform-origin:center center;">14</div>
<div class="t" style="left:8.5px;top:279.50px;font-size:8.0px;line-height:9.60px;color:#616161;transform:translateX(-50%) scale(1.0,1.1);transform-origin:center center;">15</div>
<div class="t" style="left:8.5px;top:291.50px;font-size:8.0px;line-height:9.60px;color:#616161;transform:translateX(-50%) scale(1.0,1.1);transform-origin:center center;">16</div>
<div class="t" style="left:8.5px;top:303.50px;font-size:8.0px;line-height:9.60px;color:#616161;transform:translateX(-50%) scale(1.0,1.1);transform-origin:center center;">17</div>
<div class="t" style="left:8.5px;top:315.50px;font-size:8.0px;line-height:9.60px;color:#616161;transform:translateX(-50%) scale(1.0,1.1);transform-origin:center center;">18</div>
<div class="t" style="left:8.5px;top:327.50px;font-size:8.0px;line-height:9.60px;color:#616161;transform:translateX(-50%) scale(1.0,1.1);transform-origin:center center;">19</div>
<div class="t" style="left:8.5px;top:339.50px;font-size:8.0px;line-height:9.60px;color:#616161;transform:translateX(-50%) scale(1.0,1.1);transform-origin:center center;">20</div>
<div class="t" style="left:8.5px;top:351.50px;font-size:8.0px;line-height:9.60px;color:#616161;transform:translateX(-50%) scale(1.0,1.1);transform-origin:center center;">21</div>
<div class="t" style="left:8.5px;top:363.50px;font-size:8.0px;line-height:9.60px;color:#616161;transform:translateX(-50%) scale(1.0,1.1);transform-origin:center center;">22</div>
<div class="t" style="left:8.5px;top:375.50px;font-size:8.0px;line-height:9.60px;color:#616161;transform:translateX(-50%) scale(1.0,1.1);transform-origin:center center;">23</div>
<div class="b" style="left:57px;top:145px;width:178px;height:27px;background:#e97132;"></div>
<div class="t" style="left:64.8px;top:141.80px;font-size:21.0px;line-height:25.20px;color:#fff;font-weight:700;transform:scale(0.971,1.0);transform-origin:left center;">Enter Your Name</div>
<div class="b" style="left:261px;top:145px;width:206px;height:28.5px;background:#4d93d9;"></div>
<div class="t" style="left:267.6px;top:143.82px;font-size:20.3px;line-height:24.36px;color:#fff;font-weight:700;">Weekly Purchases</div>
<div class="b" style="left:490px;top:157px;width:70px;height:24px;background:#4d93d9;"></div>
<div class="t" style="left:492.1px;top:162.36px;font-size:12.4px;line-height:14.88px;color:#fff;font-weight:700;transform:scale(0.93,1.0);transform-origin:left center;">Grand Total</div>
<div class="b" style="left:560px;top:157px;width:76px;height:24px;background:#a6c9ec;"></div>
<div class="t" style="left:597.8px;top:162.16px;font-size:12.4px;line-height:14.88px;color:#000;font-weight:700;transform:translateX(-50%) scale(0.97,1.0);transform-origin:center center;">$710.55</div>
<div class="b" style="left:57px;top:192.5px;width:579px;height:12.5px;background:#4d93d9;"></div>
<div class="t" style="left:59px;top:194.68px;font-size:8.7px;line-height:10.44px;color:#fff;font-weight:700;transform:scale(1.013,1.1);transform-origin:left center;">Date:</div>
<div class="t" style="left:99.7px;top:194.68px;font-size:8.7px;line-height:10.44px;color:#fff;font-weight:700;transform:scale(0.979,1.1);transform-origin:left center;">Company:</div>
<div class="t" style="left:157.3px;top:194.68px;font-size:8.7px;line-height:10.44px;color:#fff;font-weight:700;transform:scale(1.014,1.1);transform-origin:left center;">Item #:</div>
<div class="t" style="left:192px;top:194.68px;font-size:8.7px;line-height:10.44px;color:#fff;font-weight:700;transform:scale(0.964,1.1);transform-origin:left center;">Brand:</div>
<div class="t" style="left:253.7px;top:194.68px;font-size:8.7px;line-height:10.44px;color:#fff;font-weight:700;transform:scale(1.024,1.1);transform-origin:left center;">Item:</div>
<div class="t" style="left:358.9px;top:194.68px;font-size:8.7px;line-height:10.44px;color:#fff;font-weight:700;transform:scale(1.0,1.1);transform-origin:left center;">Category:</div>
<div class="t" style="left:424.9px;top:194.68px;font-size:8.7px;line-height:10.44px;color:#fff;font-weight:700;transform:scale(1.01,1.1);transform-origin:left center;">Price</div>
<div class="t" style="left:492px;top:194.68px;font-size:8.7px;line-height:10.44px;color:#fff;font-weight:700;transform:scale(1.034,1.1);transform-origin:left center;">Quantity:</div>
<div class="t" style="left:561.3px;top:194.68px;font-size:8.7px;line-height:10.44px;color:#fff;font-weight:700;transform:scale(1.039,1.1);transform-origin:left center;">Total:</div>
<div class="t" style="left:99.3px;top:207.54px;font-size:8.1px;line-height:9.72px;color:#242424;transform:scale(1.0,1.1);transform-origin:left center;">Amazon</div>
<div class="t" style="right:621px;top:207.54px;font-size:8.1px;line-height:9.72px;color:#242424;transform:scale(1.0,1.1);transform-origin:right center;">25</div>
<div class="t" style="left:201.2px;top:207.54px;font-size:8.1px;line-height:9.72px;color:#242424;transform:scale(0.96,1.1);transform-origin:left center;">et Coke</div>
<div class="t" style="left:253px;top:207.66px;font-size:7.9px;line-height:9.48px;color:#242424;transform:scale(1.0,1.1);transform-origin:left center;">Can Soda</div>
<div class="t" style="left:358.5px;top:207.54px;font-size:8.1px;line-height:9.72px;color:#242424;transform:scale(1.0,1.1);transform-origin:left center;">Drinks</div>
<div class="t" style="right:320.7px;top:207.54px;font-size:8.1px;line-height:9.72px;color:#242424;transform:scale(1.069,1.1);transform-origin:right center;">78.95</div>
<div class="t" style="right:251.5px;top:207.54px;font-size:8.1px;line-height:9.72px;color:#242424;transform:scale(1.0,1.1);transform-origin:right center;">9</div>
<div class="t" style="right:175.89999999999998px;top:207.54px;font-size:8.1px;line-height:9.72px;color:#242424;transform:scale(1.073,1.1);transform-origin:right center;">710.55</div>
<svg style="left:0;top:0" width="810" height="445" viewBox="0 0 810 445" shape-rendering="crispEdges"><line x1="57" y1="205.5" x2="637" y2="205.5" stroke="#c9c9c9" stroke-width="1" stroke-dasharray="2,3" stroke-dashoffset="-2"/><line x1="57" y1="205.5" x2="637" y2="205.5" stroke="#8a8a8a" stroke-width="1" stroke-dasharray="1,4"/><line x1="57" y1="217.5" x2="637" y2="217.5" stroke="#c9c9c9" stroke-width="1" stroke-dasharray="2,3" stroke-dashoffset="-2"/><line x1="57" y1="217.5" x2="637" y2="217.5" stroke="#8a8a8a" stroke-width="1" stroke-dasharray="1,4"/><line x1="57" y1="229.5" x2="637" y2="229.5" stroke="#c9c9c9" stroke-width="1" stroke-dasharray="2,3" stroke-dashoffset="-2"/><line x1="57" y1="229.5" x2="637" y2="229.5" stroke="#8a8a8a" stroke-width="1" stroke-dasharray="1,4"/><line x1="57" y1="241.5" x2="637" y2="241.5" stroke="#c9c9c9" stroke-width="1" stroke-dasharray="2,3" stroke-dashoffset="-2"/><line x1="57" y1="241.5" x2="637" y2="241.5" stroke="#8a8a8a" stroke-width="1" stroke-dasharray="1,4"/><line x1="57" y1="253.5" x2="637" y2="253.5" stroke="#c9c9c9" stroke-width="1" stroke-dasharray="2,3" stroke-dashoffset="-2"/><line x1="57" y1="253.5" x2="637" y2="253.5" stroke="#8a8a8a" stroke-width="1" stroke-dasharray="1,4"/><line x1="57" y1="265.5" x2="637" y2="265.5" stroke="#c9c9c9" stroke-width="1" stroke-dasharray="2,3" stroke-dashoffset="-2"/><line x1="57" y1="265.5" x2="637" y2="265.5" stroke="#8a8a8a" stroke-width="1" stroke-dasharray="1,4"/><line x1="57" y1="277.5" x2="637" y2="277.5" stroke="#c9c9c9" stroke-width="1" stroke-dasharray="2,3" stroke-dashoffset="-2"/><line x1="57" y1="277.5" x2="637" y2="277.5" stroke="#8a8a8a" stroke-width="1" stroke-dasharray="1,4"/><line x1="57" y1="289.5" x2="637" y2="289.5" stroke="#c9c9c9" stroke-width="1" stroke-dasharray="2,3" stroke-dashoffset="-2"/><line x1="57" y1="289.5" x2="637" y2="289.5" stroke="#8a8a8a" stroke-width="1" stroke-dasharray="1,4"/><line x1="57" y1="301.5" x2="637" y2="301.5" stroke="#c9c9c9" stroke-width="1" stroke-dasharray="2,3" stroke-dashoffset="-2"/><line x1="57" y1="301.5" x2="637" y2="301.5" stroke="#8a8a8a" stroke-width="1" stroke-dasharray="1,4"/><line x1="57" y1="313.5" x2="637" y2="313.5" stroke="#c9c9c9" stroke-width="1" stroke-dasharray="2,3" stroke-dashoffset="-2"/><line x1="57" y1="313.5" x2="637" y2="313.5" stroke="#8a8a8a" stroke-width="1" stroke-dasharray="1,4"/><line x1="57" y1="325.5" x2="637" y2="325.5" stroke="#c9c9c9" stroke-width="1" stroke-dasharray="2,3" stroke-dashoffset="-2"/><line x1="57" y1="325.5" x2="637" y2="325.5" stroke="#8a8a8a" stroke-width="1" stroke-dasharray="1,4"/><line x1="57" y1="337.5" x2="637" y2="337.5" stroke="#c9c9c9" stroke-width="1" stroke-dasharray="2,3" stroke-dashoffset="-2"/><line x1="57" y1="337.5" x2="637" y2="337.5" stroke="#8a8a8a" stroke-width="1" stroke-dasharray="1,4"/><line x1="57" y1="349.5" x2="637" y2="349.5" stroke="#c9c9c9" stroke-width="1" stroke-dasharray="2,3" stroke-dashoffset="-2"/><line x1="57" y1="349.5" x2="637" y2="349.5" stroke="#8a8a8a" stroke-width="1" stroke-dasharray="1,4"/><line x1="57" y1="361.5" x2="637" y2="361.5" stroke="#c9c9c9" stroke-width="1" stroke-dasharray="2,3" stroke-dashoffset="-2"/><line x1="57" y1="361.5" x2="637" y2="361.5" stroke="#8a8a8a" stroke-width="1" stroke-dasharray="1,4"/><line x1="57" y1="373.5" x2="637" y2="373.5" stroke="#c9c9c9" stroke-width="1" stroke-dasharray="2,3" stroke-dashoffset="-2"/><line x1="57" y1="373.5" x2="637" y2="373.5" stroke="#8a8a8a" stroke-width="1" stroke-dasharray="1,4"/><line x1="57" y1="385.5" x2="637" y2="385.5" stroke="#c9c9c9" stroke-width="1" stroke-dasharray="2,3" stroke-dashoffset="-2"/><line x1="57" y1="385.5" x2="637" y2="385.5" stroke="#8a8a8a" stroke-width="1" stroke-dasharray="1,4"/><line x1="57.5" y1="205" x2="57.5" y2="382" stroke="#a9a9a9" stroke-width="1" stroke-dasharray="1,4" stroke-dashoffset="-2"/><line x1="57.5" y1="205" x2="57.5" y2="382" stroke="#8a8a8a" stroke-width="1" stroke-dasharray="1,4"/><line x1="97.5" y1="205" x2="97.5" y2="382" stroke="#a9a9a9" stroke-width="1" stroke-dasharray="1,4" stroke-dashoffset="-2"/><line x1="97.5" y1="205" x2="97.5" y2="382" stroke="#8a8a8a" stroke-width="1" stroke-dasharray="1,4"/><line x1="152.5" y1="205" x2="152.5" y2="382" stroke="#a9a9a9" stroke-width="1" stroke-dasharray="1,4" stroke-dashoffset="-2"/><line x1="152.5" y1="205" x2="152.5" y2="382" stroke="#8a8a8a" stroke-width="1" stroke-dasharray="1,4"/><line x1="190.5" y1="205" x2="190.5" y2="382" stroke="#a9a9a9" stroke-width="1" stroke-dasharray="1,4" stroke-dashoffset="-2"/><line x1="190.5" y1="205" x2="190.5" y2="382" stroke="#8a8a8a" stroke-width="1" stroke-dasharray="1,4"/><line x1="251.5" y1="205" x2="251.5" y2="382" stroke="#a9a9a9" stroke-width="1" stroke-dasharray="1,4" stroke-dashoffset="-2"/><line x1="251.5" y1="205" x2="251.5" y2="382" stroke="#8a8a8a" stroke-width="1" stroke-dasharray="1,4"/><line x1="356.5" y1="205" x2="356.5" y2="382" stroke="#a9a9a9" stroke-width="1" stroke-dasharray="1,4" stroke-dashoffset="-2"/><line x1="356.5" y1="205" x2="356.5" y2="382" stroke="#8a8a8a" stroke-width="1" stroke-dasharray="1,4"/><line x1="423.5" y1="205" x2="423.5" y2="382" stroke="#a9a9a9" stroke-width="1" stroke-dasharray="1,4" stroke-dashoffset="-2"/><line x1="423.5" y1="205" x2="423.5" y2="382" stroke="#8a8a8a" stroke-width="1" stroke-dasharray="1,4"/><line x1="490.5" y1="205" x2="490.5" y2="382" stroke="#a9a9a9" stroke-width="1" stroke-dasharray="1,4" stroke-dashoffset="-2"/><line x1="490.5" y1="205" x2="490.5" y2="382" stroke="#8a8a8a" stroke-width="1" stroke-dasharray="1,4"/><line x1="560.5" y1="205" x2="560.5" y2="382" stroke="#a9a9a9" stroke-width="1" stroke-dasharray="1,4" stroke-dashoffset="-2"/><line x1="560.5" y1="205" x2="560.5" y2="382" stroke="#8a8a8a" stroke-width="1" stroke-dasharray="1,4"/><line x1="635.5" y1="205" x2="635.5" y2="382" stroke="#a9a9a9" stroke-width="1" stroke-dasharray="1,4" stroke-dashoffset="-2"/><line x1="635.5" y1="205" x2="635.5" y2="382" stroke="#8a8a8a" stroke-width="1" stroke-dasharray="1,4"/></svg>
<div class="b" style="left:151.3px;top:205px;width:39.89999999999998px;height:13px;border:1.4px solid #5a9c72;border-top-color:#3a8458;"></div>
<div class="b" style="left:189px;top:216.4px;width:2.5999999999999943px;height:2.4000000000000057px;background:#217346;"></div>
<div class="b" style="left:191.4px;top:207px;width:9.799999999999983px;height:9.599999999999994px;background:#f4f4f4;border:1px solid #dadada;border-left:none;box-shadow:0 0.5px 1px rgba(0,0,0,0.15);"></div>
<svg style="left:194.3px;top:211px" width="4" height="2.5" viewBox="0 0 4 2.5"><path d="M0 0h4L2 2.5z" fill="#666"/></svg>
<div class="b" style="left:797px;top:133px;width:13px;height:249px;background:#eaebee;"></div>
<div class="b" style="left:797.5px;top:133px;width:11.0px;height:250.5px;background:#f6f6f6;border-radius:5px;"></div>
<svg style="left:800.8px;top:136px" width="6.4" height="4.4" viewBox="0 0 6.4 4.4"><path d="M0 4.4L3.2 0l3.2 4.4z" fill="#5a5a5a"/></svg>
<div class="b" style="left:801.1px;top:144.1px;width:4.899999999999977px;height:10.700000000000017px;background:#6a6a6a;border-radius:2.5px;"></div>
<svg style="left:800.9px;top:375.6px" width="6" height="4.2" viewBox="0 0 6 4.2"><path d="M0 0L3 4.2l3-4.2z" fill="#5a5a5a"/></svg>
<div class="b" style="left:0px;top:382px;width:810px;height:19px;background:#eaebee;"></div>
<svg style="left:14.6px;top:388px" width="4.2" height="6.4" viewBox="0 0 4.2 6.4"><path d="M3.8 0.3L0.7 3.2l3.1 2.9" fill="none" stroke="#8f8f8f" stroke-width="0.9"/></svg>
<svg style="left:35.4px;top:388px" width="4.2" height="6.4" viewBox="0 0 4.2 6.4"><path d="M0.4 0.3l3.1 2.9-3.1 2.9" fill="none" stroke="#8f8f8f" stroke-width="0.9"/></svg>
<div class="t" style="left:75px;top:387.75px;font-size:8.92px;line-height:10.70px;color:#333;transform:scale(1.0,1.1);transform-origin:left center;">Setup</div>
<div class="b" style="left:108px;top:382px;width:45.5px;height:18px;background:#fff;border-radius:0 0 4px 4px;"></div>
<div class="t" style="left:114px;top:386.48px;font-size:8.87px;line-height:10.64px;color:#242424;transform:scale(1.0,1.1);transform-origin:left center;-webkit-text-stroke:0.2px #242424;">weeks of</div>
<div class="b" style="left:114px;top:396.5px;width:35.5px;height:1.5px;background:#1e7145;border-radius:1px;"></div>
<div class="t" style="left:165.7px;top:387.88px;font-size:8.7px;line-height:10.44px;color:#333;transform:scale(1.0,1.1);transform-origin:left center;">Dashboard</div>
<div class="b" style="left:216px;top:386px;width:1px;height:11px;background:#d8d8d8;"></div>
<div class="b" style="left:107px;top:386px;width:1px;height:11px;background:#d8d8d8;"></div>
<svg style="left:242px;top:386px" width="9" height="9" viewBox="0 0 9 9"><path d="M4.5 0.5v8M0.5 4.5h8" stroke="#424242" stroke-width="0.9"/></svg>
<div class="b" style="left:487px;top:388.5px;width:1.3000000000000114px;height:1.3000000000000114px;background:#555;border-radius:50%;"></div>
<div class="b" style="left:487px;top:391px;width:1.3000000000000114px;height:1.3000000000000114px;background:#555;border-radius:50%;"></div>
<div class="b" style="left:487px;top:393.5px;width:1.3000000000000114px;height:1.3000000000000114px;background:#555;border-radius:50%;"></div>
<div class="b" style="left:498.5px;top:386.5px;width:299.0px;height:9.5px;background:#fbfbfb;border-radius:5px;"></div>
<svg style="left:501px;top:388.5px" width="6" height="6" viewBox="0 0 6 6"><path d="M0.5 3L5 0.3v5.4z" fill="#555"/></svg>
<div class="b" style="left:508.5px;top:389.3px;width:277.5px;height:4.300000000000011px;background:#707070;border-radius:3px;"></div>
<svg style="left:790.8px;top:389.2px" width="4.4" height="4.8" viewBox="0 0 4.4 4.8"><path d="M4.4 2.4L0 0v4.8z" fill="#5a5a5a"/></svg>
<div class="b" style="left:0px;top:401px;width:810px;height:15px;background:#f3f3f3;border-bottom:1px solid #d9dcdf;"></div>
<div class="t" style="left:7px;top:405.84px;font-size:6.6px;line-height:7.92px;color:#424242;transform:scale(0.942,1.1);transform-origin:left center;">Ready</div>
<svg style="left:37px;top:404.5px" width="9" height="9" viewBox="0 0 9 9"><rect x="0.5" y="1.5" width="8" height="7" fill="none" stroke="#424242" stroke-width="0.9"/><circle cx="4.5" cy="5" r="2" fill="none" stroke="#424242" stroke-width="0.9"/><path d="M0.5 3h8" stroke="#424242" stroke-width="0.8"/></svg>
<svg style="left:57px;top:404px" width="10" height="10" viewBox="0 0 10 10"><circle cx="5" cy="1.5" r="1.2" fill="#424242"/><path d="M1 3.2h8M5 3.2v3.3L2.5 9.5M5 6.5L7.5 9.5" fill="none" stroke="#424242" stroke-width="0.9"/></svg>
<div class="t" style="left:68px;top:405.84px;font-size:6.6px;line-height:7.92px;color:#242424;font-weight:700;transform:scale(1.0,1.1);transform-origin:left center;">Accessibility: Investigate</div>
<div class="b" style="left:622px;top:402px;width:25px;height:13.5px;background:#dcdcdc;"></div>
<svg style="left:629.5px;top:404.5px" width="9" height="8" viewBox="0 0 9 8"><rect x="0.5" y="0.5" width="8" height="7" fill="none" stroke="#424242" stroke-width="0.9"/><path d="M0.5 2.8h8M0.5 5.2h8M3.2 0.5v7M5.8 0.5v7" stroke="#424242" stroke-width="0.7"/></svg>
<svg style="left:655.5px;top:404.5px" width="9" height="8" viewBox="0 0 9 8"><rect x="0.5" y="0.5" width="8" height="7" fill="none" stroke="#424242" stroke-width="0.9"/><rect x="2.5" y="1.8" width="4" height="4.5" fill="none" stroke="#424242" stroke-width="0.7"/></svg>
<svg style="left:681px;top:404.5px" width="9" height="8" viewBox="0 0 9 8"><path d="M0.5 0.5h8v7h-8z" fill="none" stroke="#424242" stroke-width="0.9"/><path d="M4.5 0.5v4h4" fill="none" stroke="#424242" stroke-width="0.8"/></svg>
<div class="b" style="left:700.5px;top:408.5px;width:4.5px;height:0.8999999999999773px;background:#8a8a8a;"></div>
<div class="b" style="left:710px;top:408.6px;width:62px;height:0.8999999999999773px;background:#8a8a8a;"></div>
<div class="b" style="left:739.5px;top:405px;width:3.0px;height:8px;background:#424242;"></div>
<svg style="left:775px;top:405px" width="7" height="7" viewBox="0 0 7 7"><path d="M3.5 0.5v6M0.5 3.5h6" stroke="#777" stroke-width="0.8"/></svg>
<div class="t" style="left:789px;top:405.81px;font-size:6.65px;line-height:7.98px;color:#424242;transform:scale(1.0,1.1);transform-origin:left center;">100%</div>
<div class="b" style="left:0px;top:416px;width:810px;height:29px;background:linear-gradient(90deg,#dfe6ec,#dde9f0 45%,#ddebf2);"></div>
<svg style="left:12.9px;top:423.1px" width="15" height="14.4" viewBox="0 0 15 14.4"><defs><linearGradient id="wg" x1="0" y1="0" x2="1" y2="1"><stop offset="0" stop-color="#44bdf5"/><stop offset="1" stop-color="#0b6fd1"/></linearGradient></defs><path d="M0 1a1 1 0 0 1 1-1h6v6.9H0zM7.6 0h6.4a1 1 0 0 1 1 1v5.9H7.6zM0 7.5h7v6.9H1a1 1 0 0 1-1-1zM7.6 7.5H15v5.9a1 1 0 0 1-1 1H7.6z" fill="url(#wg)"/></svg>
<svg style="left:41px;top:423px" width="16" height="15" viewBox="0 0 16 15"><circle cx="6.3" cy="6" r="5" fill="none" stroke="#1c1c1c" stroke-width="1.3"/><path d="M10 9.6l4.6 4.6" stroke="#1c1c1c" stroke-width="1.5" stroke-linecap="round"/></svg>
<svg style="left:68.5px;top:423px" width="16" height="15" viewBox="0 0 16 15"><defs><linearGradient id="tg" x1="0" y1="0" x2="1" y2="1"><stop offset="0" stop-color="#f8f8f8"/><stop offset="1" stop-color="#9a9a9a"/></linearGradient></defs><rect x="0.2" y="3.6" width="12.2" height="10.4" rx="1" fill="#202020"/><rect x="4.3" y="0" width="11.2" height="9.7" rx="1" fill="url(#tg)" opacity="0.9"/></svg>
<svg style="left:97px;top:423.5px" width="15" height="14" viewBox="0 0 15 14"><path d="M0 1.5a1 1 0 0 1 1-1h4.5l1.5 1.5h7a1 1 0 0 1 1 1V13a1 1 0 0 1-1 1H1a1 1 0 0 1-1-1z" fill="#1ba392"/><rect x="0" y="4" width="15" height="10" rx="1" fill="#28b5a3"/><path d="M7.5 5.5v5M5.3 8.5l2.2 2.2 2.2-2.2M5 12.2h5" fill="none" stroke="#fff" stroke-width="0.9"/></svg>
<div class="b" style="left:103px;top:441px;width:4px;height:1.1999999999999886px;background:#707070;border-radius:1px;"></div>
<div class="t" style="left:117.3px;top:427.04px;font-size:7.6px;line-height:9.12px;color:#242424;transform:scale(1.0,1.1);transform-origin:left center;">Downloads - File Explor</div>
<svg style="left:210.7px;top:422.8px" width="16" height="15" viewBox="0 0 16 15"><defs><linearGradient id="eg1" x1="0" y1="1" x2="1" y2="0"><stop offset="0" stop-color="#0c59a4"/><stop offset="0.5" stop-color="#1e8fd8"/><stop offset="1" stop-color="#5ad68c"/></linearGradient></defs><path d="M8 0C12.5 0 16 3 16 6.8c0 2.6-2 4-4.3 4-2 0-3.2-.9-3.2-2.2 0-.6.4-1 .4-1.6C8.9 5.6 7.3 4.6 5.6 4.6 2.8 4.6.8 7 .8 9.6c0 3 2.9 5.4 6.6 5.4C3 15 0 11.6 0 7.5 0 3.3 3.6 0 8 0z" fill="url(#eg1)"/><path d="M.8 9.6C.8 12.6 3.7 15 7.4 15c2.7 0 5.2-1.3 6.5-3.3-1.3.7-2.7 1-4 1-3.3 0-5.5-1.8-5.5-4.4 0-1.2.6-2.3 1.3-3.1C3 5.2.8 7.2.8 9.6z" fill="#0d5fae"/></svg>
<svg style="left:238.5px;top:423px" width="15" height="15" viewBox="0 0 15 15"><path d="M4.5 3V1.8a3 1.5 0 0 1 6 0V3" fill="none" stroke="#1b4f8f" stroke-width="1"/><rect x="0" y="3" width="15" height="12" rx="1.5" fill="#1b4f8f"/><rect x="4.5" y="6" width="2.8" height="2.8" fill="#f25022"/><rect x="7.7" y="6" width="2.8" height="2.8" fill="#7fba00"/><rect x="4.5" y="9.2" width="2.8" height="2.8" fill="#00a4ef"/><rect x="7.7" y="9.2" width="2.8" height="2.8" fill="#ffb900"/></svg>
<svg style="left:266.5px;top:422.5px" width="16" height="16" viewBox="0 0 16 16"><circle cx="8" cy="8" r="7.8" fill="#db4437"/><path d="M8 8L1.3 4.1A7.8 7.8 0 0 0 4.1 14.8z" fill="#0f9d58"/><path d="M8 8l-3.9 6.8A7.8 7.8 0 0 0 15.8 8z" fill="#ffcd40"/><path d="M8 8L15.8 8A7.8 7.8 0 0 0 8 0.2z" fill="#db4437"/><circle cx="8" cy="8" r="3.8" fill="#fff"/><circle cx="8" cy="8" r="3" fill="#4285f4"/></svg>
<div class="b" style="left:290px;top:419px;width:95px;height:22.5px;background:rgba(255,255,255,0.55);border:1px solid rgba(200,210,222,0.7);border-radius:4px;"></div>
<svg style="left:293.5px;top:423px" width="16" height="15" viewBox="0 0 16 15"><rect x="4" y="0" width="12" height="15" rx="1.2" fill="#21a366"/><rect x="4" y="5" width="12" height="5" fill="#107c41"/><rect x="4" y="10" width="12" height="5" rx="1" fill="#185c37"/><rect x="0" y="3" width="9" height="9" rx="1" fill="#107c41"/><text x="4.5" y="10.3" font-size="7.5" font-weight="bold" fill="#fff" text-anchor="middle" font-family="Liberation Sans">X</text></svg>
<div class="b" style="left:297px;top:441px;width:10px;height:2px;background:#0a67c7;border-radius:1px;"></div>
<div class="t" style="left:314.5px;top:427.07px;font-size:7.55px;line-height:9.06px;color:#242424;transform:scale(1.0,1.1);transform-origin:left center;">Restro book - Excel</div>
<svg style="left:630px;top:428.5px" width="8" height="5" viewBox="0 0 8 5"><path d="M0.5 4.5L4 1l3.5 3.5" fill="none" stroke="#1b1b1b" stroke-width="1"/></svg>
<svg style="left:648px;top:424.5px" width="11" height="11" viewBox="0 0 11 11"><rect x="0" y="0" width="11" height="11" rx="1" fill="#2b7fd6"/><path d="M5.5 1.5v8M2 3.5l7 4M9 3.5l-7 4" stroke="#fff" stroke-width="0.9"/></svg>
<div class="t" style="left:677.65px;top:422.56px;font-size:7.4px;line-height:8.88px;color:#242424;transform:translateX(-50%) scale(0.956,1.1);transform-origin:center center;">ENG</div>
<div class="t" style="left:677.6px;top:431.36px;font-size:7.4px;line-height:8.88px;color:#242424;transform:translateX(-50%) scale(1.0,1.1);transform-origin:center center;">IN</div>
<svg style="left:696px;top:425.5px" width="11" height="9" viewBox="0 0 11 9"><path d="M0.5 3.2a7 7 0 0 1 10 0M2 5a5 5 0 0 1 7 0M3.6 6.8a2.6 2.6 0 0 1 3.8 0" fill="none" stroke="#1b1b1b" stroke-width="0.9"/><circle cx="5.5" cy="8.3" r="0.7" fill="#1b1b1b"/></svg>
<svg style="left:711px;top:425.5px" width="11" height="10" viewBox="0 0 11 10"><path d="M0.5 3.5h2L5.5 0.8v8.4L2.5 6.5h-2z" fill="none" stroke="#1b1b1b" stroke-width="0.9"/><path d="M7.5 3a2.5 2.5 0 0 1 0 4" fill="none" stroke="#9a9a9a" stroke-width="0.8"/></svg>
<svg style="left:727px;top:426.5px" width="11" height="7" viewBox="0 0 11 7"><rect x="0.5" y="0.5" width="9" height="6" rx="1" fill="none" stroke="#1b1b1b" stroke-width="0.9"/><rect x="2" y="2" width="3" height="3" fill="#1b1b1b"/><rect x="9.8" y="2.3" width="1" height="2.4" fill="#1b1b1b"/></svg>
<div class="t" style="right:27.600000000000023px;top:421.74px;font-size:7.6px;line-height:9.12px;color:#242424;transform:scale(1.0,1.1);transform-origin:right center;">2:48 AM</div>
<div class="t" style="right:27.600000000000023px;top:430.85px;font-size:7.75px;line-height:9.30px;color:#242424;transform:scale(1.0,1.1);transform-origin:right center;">4/16/2024</div>
<svg style="left:788px;top:425px" width="9" height="10" viewBox="0 0 9 10"><path d="M4.5 0.5a3 3 0 0 1 3 3v3l1.2 1.5H0.3L1.5 6.5v-3a3 3 0 0 1 3-3z" fill="#0a67c7"/><path d="M3.3 8.6a1.2 1.2 0 0 0 2.4 0z" fill="#0a67c7"/></svg>
</body></html>
